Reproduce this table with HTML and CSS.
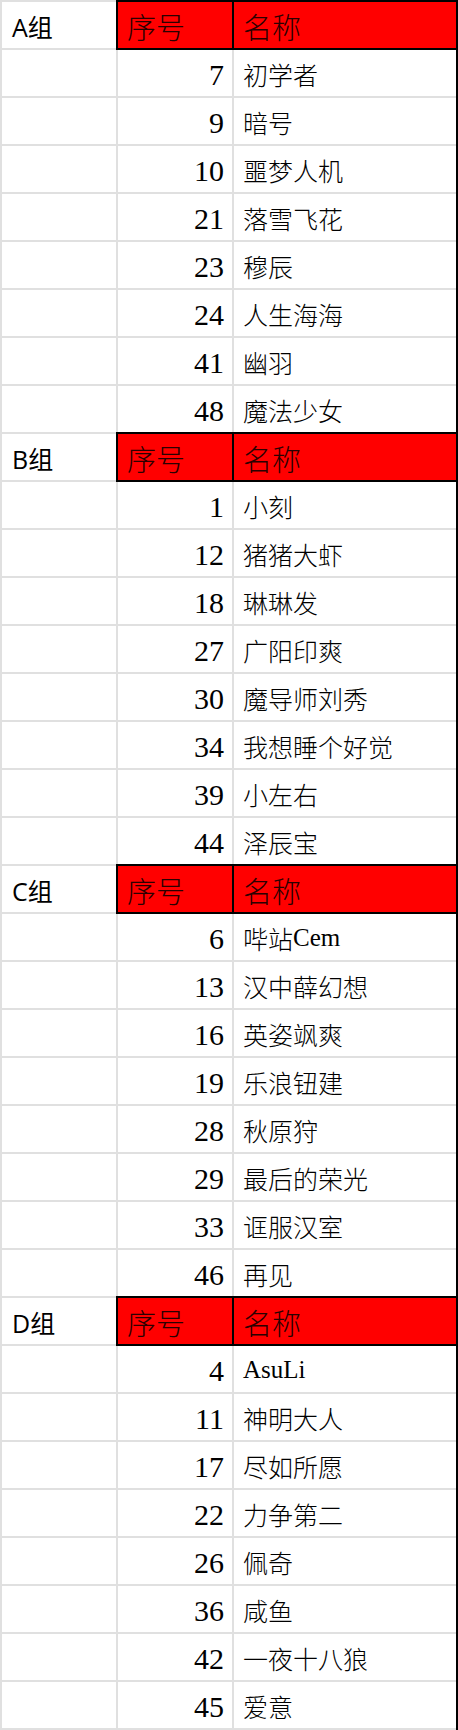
FILE: index.html
```html
<!DOCTYPE html>
<html lang="zh-CN">
<head>
<meta charset="utf-8">
<title>分组名单</title>
<link rel="stylesheet" href="styles.css">
</head>
<body>
<div class="sheet">
  <div class="cell group">A组</div><div class="cell head">序号</div><div class="cell head">名称</div>
  <div class="cell"></div><div class="cell num">7</div><div class="cell name">初学者</div>
  <div class="cell"></div><div class="cell num">9</div><div class="cell name">暗号</div>
  <div class="cell"></div><div class="cell num">10</div><div class="cell name">噩梦人机</div>
  <div class="cell"></div><div class="cell num">21</div><div class="cell name">落雪飞花</div>
  <div class="cell"></div><div class="cell num">23</div><div class="cell name">穆辰</div>
  <div class="cell"></div><div class="cell num">24</div><div class="cell name">人生海海</div>
  <div class="cell"></div><div class="cell num">41</div><div class="cell name">幽羽</div>
  <div class="cell"></div><div class="cell num">48</div><div class="cell name">魔法少女</div>

  <div class="cell group">B组</div><div class="cell head">序号</div><div class="cell head">名称</div>
  <div class="cell"></div><div class="cell num">1</div><div class="cell name">小刻</div>
  <div class="cell"></div><div class="cell num">12</div><div class="cell name">猪猪大虾</div>
  <div class="cell"></div><div class="cell num">18</div><div class="cell name">琳琳发</div>
  <div class="cell"></div><div class="cell num">27</div><div class="cell name">广阳印爽</div>
  <div class="cell"></div><div class="cell num">30</div><div class="cell name">魔导师刘秀</div>
  <div class="cell"></div><div class="cell num">34</div><div class="cell name">我想睡个好觉</div>
  <div class="cell"></div><div class="cell num">39</div><div class="cell name">小左右</div>
  <div class="cell"></div><div class="cell num">44</div><div class="cell name">泽辰宝</div>

  <div class="cell group">C组</div><div class="cell head">序号</div><div class="cell head">名称</div>
  <div class="cell"></div><div class="cell num">6</div><div class="cell name">哔站<span class="latin">Cem</span></div>
  <div class="cell"></div><div class="cell num">13</div><div class="cell name">汉中薛幻想</div>
  <div class="cell"></div><div class="cell num">16</div><div class="cell name">英姿飒爽</div>
  <div class="cell"></div><div class="cell num">19</div><div class="cell name">乐浪钮建</div>
  <div class="cell"></div><div class="cell num">28</div><div class="cell name">秋原狩</div>
  <div class="cell"></div><div class="cell num">29</div><div class="cell name">最后的荣光</div>
  <div class="cell"></div><div class="cell num">33</div><div class="cell name">诓服汉室</div>
  <div class="cell"></div><div class="cell num">46</div><div class="cell name">再见</div>

  <div class="cell group">D组</div><div class="cell head">序号</div><div class="cell head">名称</div>
  <div class="cell"></div><div class="cell num">4</div><div class="cell name"><span class="latin">AsuLi</span></div>
  <div class="cell"></div><div class="cell num">11</div><div class="cell name">神明大人</div>
  <div class="cell"></div><div class="cell num">17</div><div class="cell name">尽如所愿</div>
  <div class="cell"></div><div class="cell num">22</div><div class="cell name">力争第二</div>
  <div class="cell"></div><div class="cell num">26</div><div class="cell name">佩奇</div>
  <div class="cell"></div><div class="cell num">36</div><div class="cell name">咸鱼</div>
  <div class="cell"></div><div class="cell num">42</div><div class="cell name">一夜十八狼</div>
  <div class="cell"></div><div class="cell num">45</div><div class="cell name">爱意</div>
</div>
</body>
</html>
```
FILE: styles.css
```css
html, body {
  margin: 0;
  padding: 0;
  background: #ffffff;
}

.sheet {
  box-sizing: border-box;
  width: 458px;
  display: grid;
  grid-template-columns: 114px 114px 222px;
  grid-auto-rows: 46px;
  gap: 2px;
  padding: 2px;
  background: linear-gradient(to left, #000000 2px, #e0e0e0 2px);
}

.cell {
  background: #ffffff;
  display: flex;
  align-items: center;
  overflow: hidden;
  white-space: nowrap;
  color: #000000;
}

.group {
  padding: 2px 0 0 10px;
  font-family: "Open Sans", "Noto Sans CJK SC", sans-serif;
  font-size: 25px;
}

.head {
  background: #ff0000;
  outline: 2px solid #000000;
  padding: 2px 0 0 9px;
  font-family: "Noto Sans CJK SC", sans-serif;
  font-weight: 300;
  font-size: 29px;
  color: #2a0000;
}

.num {
  justify-content: flex-end;
  padding: 3px 8px 0 0;
  font-family: "Liberation Serif", serif;
  font-size: 30px;
}

.name {
  padding: 2px 0 0 9px;
  font-family: "Noto Sans CJK SC", sans-serif;
  font-weight: 300;
  font-size: 25px;
}

.latin {
  font-family: "Liberation Serif", serif;
  font-size: 25px;
  font-weight: 400;
}
```
